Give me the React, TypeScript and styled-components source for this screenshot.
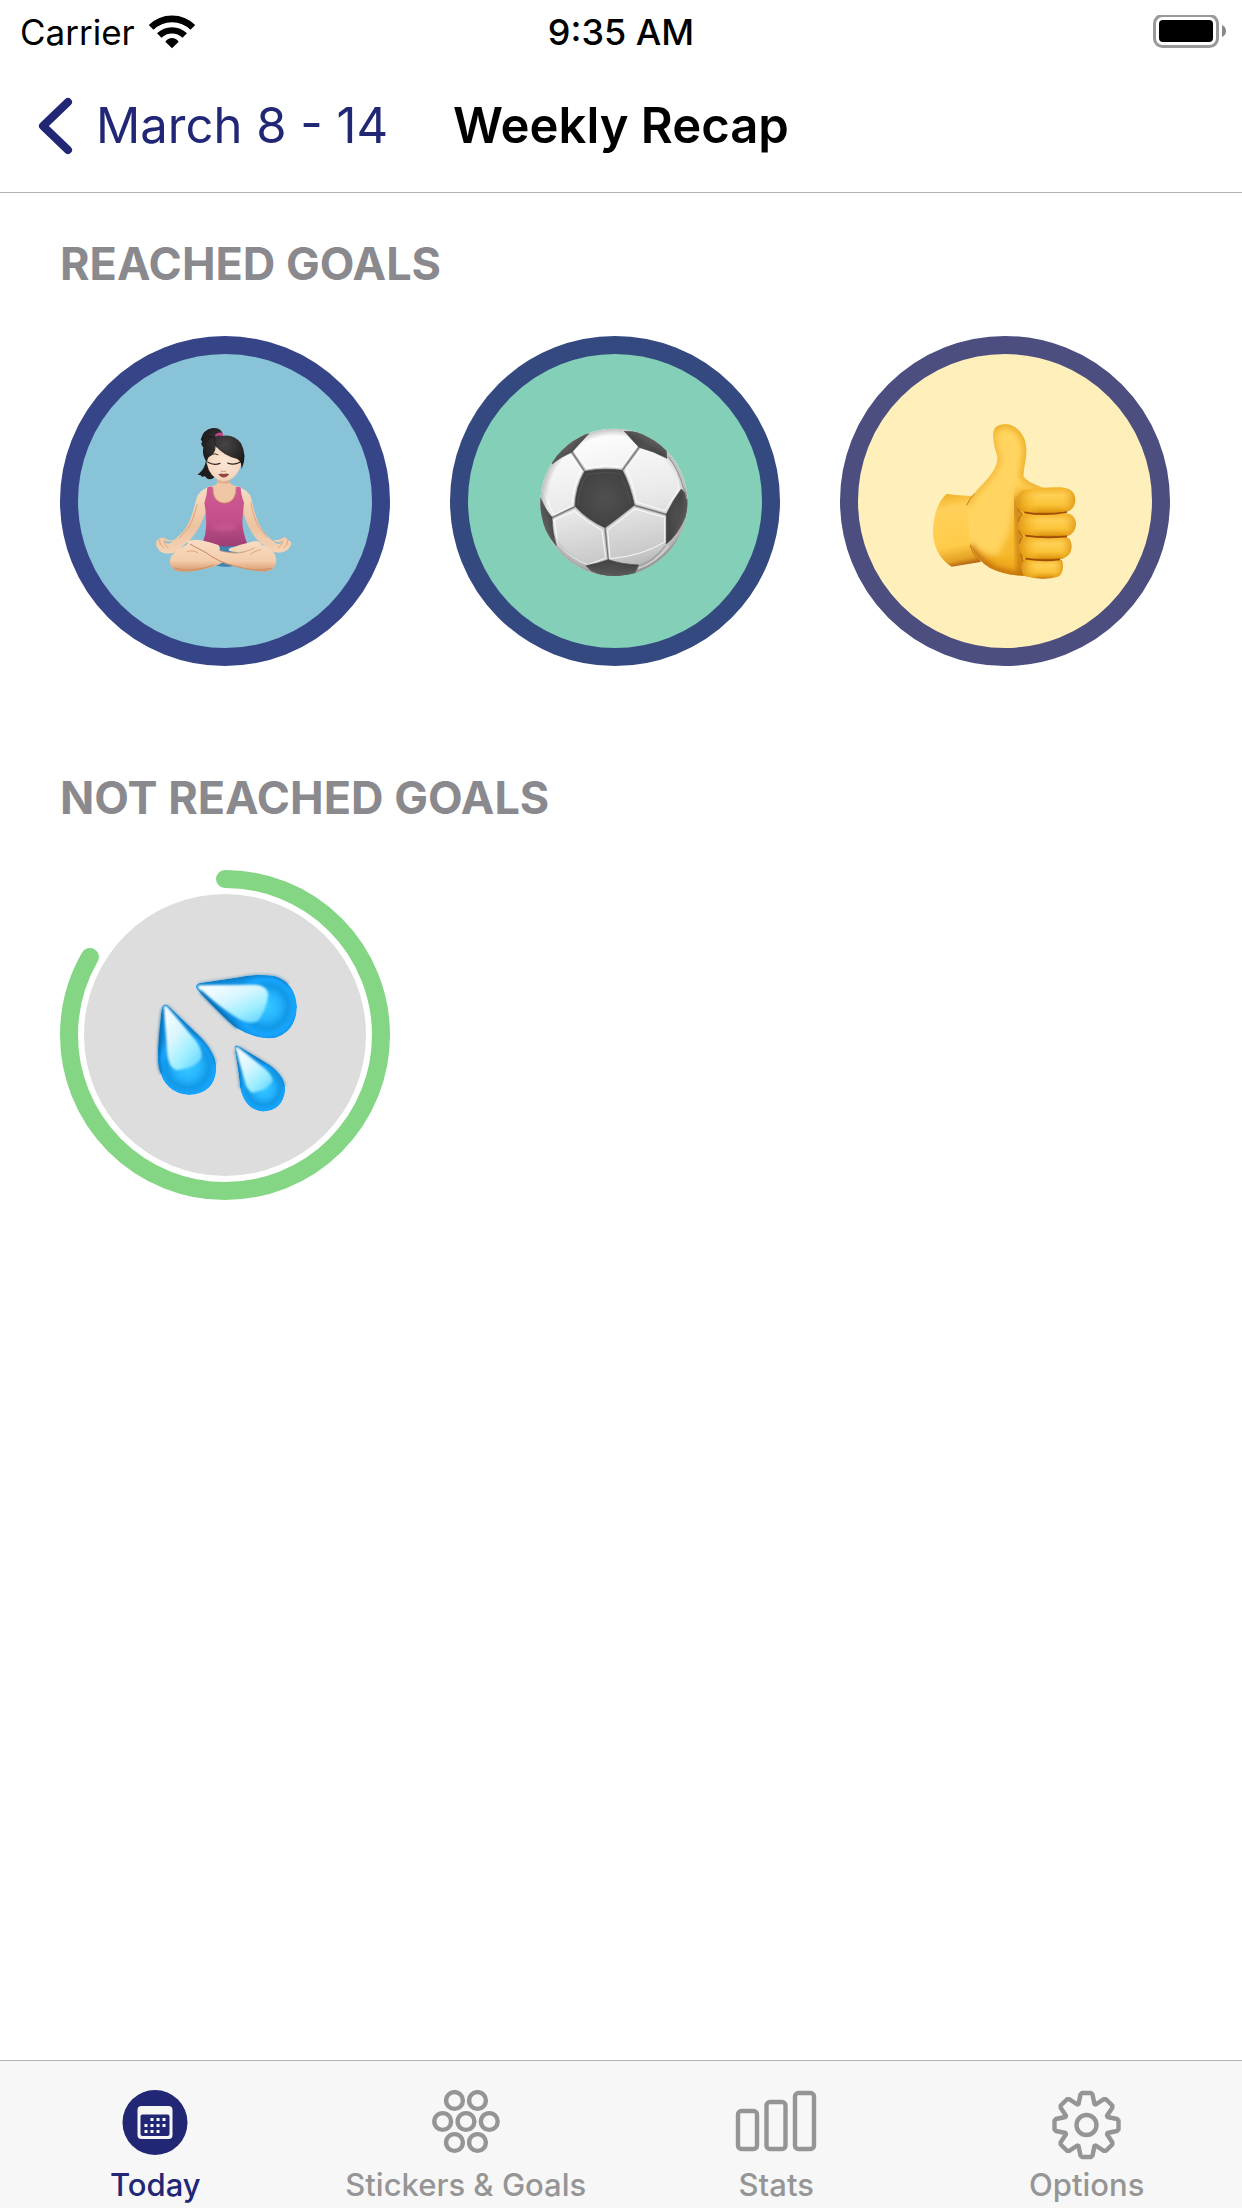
import React from 'react';
import styled, { createGlobalStyle } from 'styled-components';

const navy = '#212774';
const muted = '#959595';
const hairline = '#b2b2b2';

const GlobalStyle = createGlobalStyle`
  *, *::before, *::after { box-sizing: border-box; }
  body {
    margin: 0;
    background: #fff;
    color: #000;
    font-family: Inter, "Liberation Sans", sans-serif;
  }
`;

const Screen = styled.div`
  display: flex;
  flex-direction: column;
  min-height: 100vh;
`;

const ThreeColumns = styled.div`
  display: grid;
  grid-template-columns: 1fr auto 1fr;
  align-items: center;
`;

const StatusBar = styled(ThreeColumns)`
  height: 60px;
  padding: 2px 16px 0;
  font-size: 35px;
  line-height: 60px;
`;

const Carrier = styled.div`
  display: flex;
  align-items: center;
  gap: 13px;
  padding-left: 4px;
`;

const Clock = styled.time`
  font-size: 36px;
  font-weight: 500;
`;

const StatusEnd = styled.div`
  display: flex;
  justify-content: flex-end;
`;

const NavBar = styled(ThreeColumns).attrs({ as: 'header' })`
  height: 133px;
  padding: 0 36px;
  border-bottom: 1px solid ${hairline};
  line-height: 60px;
`;

const BackButton = styled.button`
  display: flex;
  align-items: center;
  justify-self: start;
  gap: 20px;
  padding: 0;
  border: 0;
  background: none;
  color: ${navy};
  font: inherit;
  font-size: 49px;
  white-space: nowrap;
  cursor: pointer;
`;

const Title = styled.h1`
  margin: 0;
  font-size: 49px;
  font-weight: 600;
`;

const Content = styled.main`
  flex: 1;
  padding: 41px 60px 60px;
`;

const Section = styled.section`
  margin-bottom: 102px;
`;

const SectionTitle = styled.h2`
  margin: 0 0 42px;
  color: #8a898e;
  font-size: 45px;
  font-weight: 700;
  line-height: 60px;
`;

const GoalList = styled.ul`
  display: flex;
  flex-wrap: wrap;
  gap: 60px;
  margin: 0;
  padding: 0;
  list-style: none;
`;

const Goal = styled.li<{ $fill?: string; $ring?: string }>`
  display: grid;
  place-items: center;
  width: 330px;
  height: 330px;
  border-radius: 50%;
  background: ${(p) => p.$fill ?? 'none'};
  border: ${(p) => (p.$ring ? `18px solid ${p.$ring}` : '0')};

  > svg {
    grid-area: 1 / 1;
  }
`;

const TabBar = styled.nav`
  display: grid;
  grid-template-columns: repeat(4, 1fr);
  height: 148px;
  padding-top: 29px;
  border-top: 1px solid ${hairline};
  background: #f7f7f7;
`;

const Tab = styled.a<{ $active?: boolean }>`
  display: flex;
  flex-direction: column;
  align-items: center;
  gap: 7px;
  color: ${(p) => (p.$active ? navy : muted)};
  font-size: 31px;
  font-weight: 500;
  line-height: 36px;
  text-decoration: none;
  white-space: nowrap;
`;

const WifiIcon = () => (
  <svg width="48" height="35" viewBox="444 38 144 105" aria-hidden="true">
    <g fill="none" stroke="#000">
      <path strokeWidth="20" d="M453.400 75.400A88.500 88.500 0 0 1 578.600 75.400" />
      <path strokeWidth="19" d="M477.800 99.800A54 54 0 0 1 554.200 99.800" />
    </g>
    <path d="M516 138L496 118Q504 107 516 107T536 118Z" />
  </svg>
);

const BatteryIcon = () => (
  <svg width="73" height="34" viewBox="0 1 73 34" aria-hidden="true">
    <rect x="1.500" y="1.500" width="63" height="31" rx="8" fill="none" stroke="#999" strokeWidth="3" />
    <rect x="6" y="6" width="54" height="22" rx="4" />
    <path d="M69 11Q73 13 73 17T69 23Z" fill="#888" />
  </svg>
);

const ChevronIcon = () => (
  <svg width="40" height="58" viewBox="0 0 40 58" aria-hidden="true">
    <path d="M32 5L7 29L32 53" fill="none" stroke={navy} strokeWidth="8" strokeLinecap="round" strokeLinejoin="round" />
  </svg>
);

const TabIcon = ({ children }: { children: React.ReactNode }) => (
  <svg width="82" height="70" viewBox="-41 0 82 70" fill="none" stroke="currentColor" strokeWidth="4.400" strokeLinejoin="round" aria-hidden="true">
    {children}
  </svg>
);

const calendarDots = [
  [1, 0], [2, 0], [3, 0],
  [0, 1], [1, 1], [2, 1], [3, 1],
  [0, 2], [1, 2], [2, 2],
];

const TodayIcon = () => (
  <TabIcon>
    <circle cy="32.500" r="32.500" fill={navy} stroke="none" />
    <rect x="-17.500" y="16" width="35" height="33" rx="4" fill="#f7f7f7" stroke="none" />
    <rect x="-14.500" y="24.500" width="29" height="21.500" rx="2" fill={navy} stroke="none" />
    {calendarDots.map(([c, r]) => (
      <rect key={`${c}${r}`} x={-10.500 + c * 6} y={28 + r * 6} width="3" height="3" fill="#fff" stroke="none" />
    ))}
  </TabIcon>
);

const stickerSpots = [
  [-11.500, 10.500], [11.500, 10.500],
  [-23.300, 31.500], [0, 31.500], [23.300, 31.500],
  [-11.500, 52.500], [11.500, 52.500],
];

const StickersIcon = () => (
  <TabIcon>
    {stickerSpots.map(([x, y]) => (
      <circle key={`${x},${y}`} cx={x} cy={y} r="8.400" />
    ))}
  </TabIcon>
);

const StatsIcon = () => (
  <TabIcon>
    <rect x="-38" y="21" width="19" height="38" rx="3.500" />
    <rect x="-9.500" y="12" width="19" height="47" rx="3.500" />
    <rect x="19" y="3" width="19" height="56" rx="3.500" />
  </TabIcon>
);

const toothProfile = [
  [-8, -21], [-6, -30.500], [-4.500, -32], [4.500, -32], [6, -30.500], [8, -21],
];

const gearPoints = Array.from({ length: 8 }, (_, i) => {
  const a = (i * Math.PI) / 4;
  return toothProfile
    .map(([x, y]) => `${(x * Math.cos(a) - y * Math.sin(a)).toFixed(2)},${(x * Math.sin(a) + y * Math.cos(a)).toFixed(2)}`)
    .join(' ');
}).join(' ');

const OptionsIcon = () => (
  <TabIcon>
    <g transform="translate(-0.500 35)">
      <polygon points={gearPoints} />
      <circle r="10" />
    </g>
  </TabIcon>
);

const YogaArt = () => (
  <svg width="170" height="180" viewBox="0 3 510 540" role="img" aria-label="Yoga">
    <defs>
      <linearGradient id="yArm" x1="0" y1="0" x2="0" y2="1">
        <stop offset="0" stopColor="#f8dcc4" />
        <stop offset=".6" stopColor="#edc3a0" />
        <stop offset="1" stopColor="#f5d3b6" />
      </linearGradient>
      <linearGradient id="yLeg" x1="0" y1="0" x2="0" y2="1">
        <stop offset="0" stopColor="#f8dcc2" />
        <stop offset=".65" stopColor="#f3cdac" />
        <stop offset="1" stopColor="#d9986c" />
      </linearGradient>
      <radialGradient id="yFace" cx=".5" cy=".45" r=".6">
        <stop offset="0" stopColor="#fbe6d6" />
        <stop offset=".75" stopColor="#f6d8c1" />
        <stop offset="1" stopColor="#e6b593" />
      </radialGradient>
      <linearGradient id="yTop" x1="0" y1="0" x2="0" y2="1">
        <stop offset="0" stopColor="#cf5b93" />
        <stop offset=".55" stopColor="#c4508b" />
        <stop offset="1" stopColor="#9c3e74" />
      </linearGradient>
      <radialGradient id="yHair" cx=".55" cy=".4" r=".6">
        <stop offset="0" stopColor="#4a4648" />
        <stop offset="1" stopColor="#191718" />
      </radialGradient>
      <filter id="ySoft" x="-30%" y="-30%" width="160%" height="160%"><feGaussianBlur stdDeviation="4" /></filter>
    </defs>
    <path d="M198 150Q196 176 173 194Q184 194 186 201Q198 196 199 204Q212 212 223 202L222 160Z" fill="#1f1c1d" />
    <path d="M233 188L233 217Q230 228 200 231L216 290H290L304 231Q272 228 270 217V188Z" fill="#efc7a7" />
    <path d="M235 210Q251 219 269 208L270 218Q252 224 234 217Z" fill="#d99e76" opacity=".7" />
    <path d="M210 230Q178 238 169 266C158 312 146 350 122 372Q105 388 91 400Q76 404 73 390Q82 396 91 394Q106 395 102 390Q86 392 77 386Q66 378 56 387Q45 392 49 407Q55 424 73 430Q94 434 111 422L150 390Q182 355 199 300Z" fill="url(#yArm)" />
    <path d="M292 230Q326 238 334 266C344 312 355 345 374 370Q390 388 408 400Q422 406 427 392Q420 399 412 396Q398 394 403 390Q420 392 429 383Q440 379 442 391Q457 392 453 405Q447 420 430 426Q408 432 390 420L350 388Q320 350 308 300Z" fill="url(#yArm)" />
    <g fill="none" stroke="#d89b70" strokeWidth="3" opacity=".8">
      <path d="M172 282Q160 330 145 354L116 386" />
      <path d="M332 278Q342 326 356 350L382 382" />
      <path d="M59 389Q57 403 73 414M73 392Q73 405 85 414M443 392Q444 405 430 414M428 393Q425 408 414 414" />
    </g>
    <path d="M190 402H318L292 425L278 468Q254 474 224 466L210 420Z" fill="#3f83b2" />
    <path d="M202 232Q210 229 219 231Q218 277 253 279Q288 277 288 231Q296 229 302 232Q303 258 312 277Q310 302 308 322Q304 356 322 402Q256 418 188 400Q201 366 198 330Q198 300 193 280Q201 257 202 232Z" fill="url(#yTop)" />
    <path d="M219 232Q218 277 253 279Q288 277 288 232" fill="none" stroke="#e0a16d" strokeWidth="3" />
    <ellipse cx="253" cy="352" rx="36" ry="12" fill="#d9639a" opacity=".4" filter="url(#ySoft)" />
    <path d="M140 394Q168 385 196 394Q222 401 235 405Q243 413 235 424L262 447Q240 468 196 476Q150 489 110 483Q85 471 90 449Q97 423 133 408Q151 401 140 394Z" fill="url(#yLeg)" />
    <path d="M364 404Q405 414 409 449Q410 481 375 485Q330 484 282 468Q231 457 196 427L150 401Q137 393 156 393Q194 398 226 405Q241 411 240 423Q290 433 317 423Q289 429 268 423Q261 414 282 411Q323 397 348 393Q365 395 364 404Z" fill="url(#yLeg)" />
    <g fill="none" stroke="#c9895d" strokeWidth="3" strokeLinecap="round">
      <path d="M151 403L198 428Q235 456 280 467" />
      <path d="M238 420Q276 434 310 427" opacity=".6" />
      <path d="M140 426Q155 418 173 428M310 426Q330 422 344 413M362 419Q343 422 332 432" opacity=".6" />
      <path d="M102 474Q150 490 220 466M283 468Q350 488 394 475" opacity=".8" />
    </g>
    <path d="M199 120Q196 150 201 163Q208 202 248 216Q290 211 304 163L307 128L278 104H224Z" fill="url(#yFace)" />
    <path d="M182 90Q189 58 218 54Q238 52 246 66L249 77Q284 73 303 100Q323 137 305 177Q304 153 292 147Q250 137 227 108Q227 131 207 141Q201 146 202 159Q184 135 190 112Q180 104 187 94Z" fill="url(#yHair)" />
    <path d="M225 75Q234 64 249 69L248 78Q234 74 227 80Z" fill="#c9478b" />
    <path d="M224 80Q222 98 230 113M188 88Q204 78 216 78M196 98Q207 82 226 80" fill="none" stroke="#0d0c0d" strokeWidth="2" opacity=".7" />
    <path d="M204 157Q221 167 240 160M263 159Q280 167 300 157" fill="none" stroke="#30231f" strokeWidth="3.500" strokeLinecap="round" />
    <path d="M214 134Q224 128 234 134" fill="none" stroke="#44332e" strokeWidth="3" strokeLinecap="round" />
    <path d="M242 183Q250 187 258 183" fill="none" stroke="#d39b7e" strokeWidth="3" />
    <path d="M235 193Q244 189 251 192Q259 189 268 193Q261 202 251 203Q241 202 235 193Z" fill="#a34e46" />
    <path d="M237 194Q251 198 266 194" fill="none" stroke="#71332f" strokeWidth="2" />
  </svg>
);

const BallArt = () => (
  <svg width="190" height="180" viewBox="0 3 570 540" role="img" aria-label="Soccer">
    <defs>
      <linearGradient id="bWhite" x1=".4" y1="0" x2=".6" y2="1">
        <stop offset="0" stopColor="#fff" />
        <stop offset=".5" stopColor="#e9e9e9" />
        <stop offset=".85" stopColor="#c9c9c9" />
        <stop offset="1" stopColor="#a6a6a6" />
      </linearGradient>
      <radialGradient id="bDark">
        <stop offset="0" stopColor="#505050" />
        <stop offset="1" stopColor="#424242" />
      </radialGradient>
      <radialGradient id="bEdge">
        <stop offset=".9" stopColor="#777" stopOpacity="0" />
        <stop offset="1" stopColor="#777" stopOpacity=".45" />
      </radialGradient>
      <clipPath id="bClip"><circle cx="282" cy="277" r="221" /></clipPath>
    </defs>
    <g clipPath="url(#bClip)">
      <rect x="55" y="50" width="455" height="455" fill="url(#bWhite)" />
      <g fill="none" stroke="#c2c2c2" strokeWidth="10">
        <path d="M155 125L194 182M357 112L308 180M343 286L440 314M255 354L265 450M163 292L96 323" />
        <path d="M194 184Q250 173 307 181Q330 225 343 285Q298 322 255 353Q200 328 165 288Q168 230 194 184Z" />
      </g>
      <g fill="none" stroke="#fff" strokeWidth="3" opacity=".85">
        <path d="M160 117L202 174Q250 163 302 170L350 112M318 174Q342 222 350 276L434 302L477 236Q472 180 443 142L366 117L318 174M344 297L434 322V396Q365 438 270 446L263 360ZM163 304L103 329L114 405Q155 447 204 464L257 444L246 362Q205 337 163 304M147 131Q87 165 66 232L101 315L157 287Q159 225 183 181Z" />
      </g>
      <g fill="none" stroke="#707070" strokeWidth="3.500">
        <path d="M155 125L194 184M357 112L307 181M343 286L440 314M255 353L265 450M165 290L96 323" />
      </g>
      <g fill="url(#bDark)" stroke="#434343" strokeWidth="2">
        <path d="M194 184Q250 173 307 181Q330 225 343 285Q298 322 255 353Q200 328 165 288Q168 230 194 184Z" />
        <path d="M206 71Q187 92 155 127Q125 139 96 162Q105 75 206 71Z" />
        <path d="M313 64L357 112Q401 124 441 145L438 113Q388 62 313 64Z" />
        <path d="M484 237Q457 273 439 313V402Q474 374 496 320Q513 257 484 237Z" />
        <path d="M61 263Q76 300 96 322Q97 367 109 407Q70 363 60 310Z" />
        <path d="M198 467Q235 460 265 449Q306 463 356 465L344 490Q270 512 213 482Z" />
      </g>
      <path d="M174 285Q178 230 201 193Q250 184 300 190Q320 225 332 281" fill="none" stroke="#606060" strokeWidth="3" opacity=".5" />
      <path d="M445 140Q476 180 489 230Q499 246 500 267M436 407Q401 453 357 468M482 375Q434 450 350 485" fill="none" stroke="#a7a7a7" strokeWidth="4" />
      <path d="M452 138Q484 178 496 232M446 408Q403 462 354 475" fill="none" stroke="#f0f0f0" strokeWidth="4" />
      <circle cx="282" cy="277" r="221" fill="url(#bEdge)" />
    </g>
  </svg>
);

const fingers = [
  'M355 237Q400 231 452 232Q496 235 496 271Q494 301 466 306Q410 318 350 308Q318 301 319 272Q323 242 355 237Z',
  'M346 312Q410 318 466 309Q497 312 498 343Q495 374 469 379Q410 386 349 378Q326 372 324 347Q324 322 346 312Z',
  'M347 379Q405 386 469 380Q485 386 485 411Q483 441 450 448Q400 454 350 445Q330 439 328 412Q328 390 347 379Z',
  'M341 447Q398 456 454 449Q459 454 459 471Q456 496 443 500Q397 513 347 499Q335 493 335 470Z',
];

const ThumbArt = () => (
  <svg width="190" height="180" viewBox="0 3 570 540" role="img" aria-label="Thumbs up">
    <defs>
      <linearGradient id="tWrist" x1=".4" y1="0" x2=".55" y2="1">
        <stop offset="0" stopColor="#f2b52b" />
        <stop offset=".18" stopColor="#ffd05a" />
        <stop offset=".7" stopColor="#ffcb49" />
        <stop offset=".9" stopColor="#e4a023" />
        <stop offset="1" stopColor="#a8540f" />
      </linearGradient>
      <linearGradient id="tFinger" x1="0" y1="0" x2="0" y2="1">
        <stop offset="0" stopColor="#f2b227" />
        <stop offset=".3" stopColor="#ffd055" />
        <stop offset=".65" stopColor="#fbc339" />
        <stop offset=".9" stopColor="#e29b12" />
        <stop offset="1" stopColor="#b66309" />
      </linearGradient>
      <linearGradient id="tSide" x1="0" y1="0" x2="1" y2="0">
        <stop offset="0" stopColor="#d48b0b" stopOpacity=".8" />
        <stop offset=".2" stopColor="#f3b121" stopOpacity=".55" />
        <stop offset=".4" stopColor="#ffc63c" stopOpacity="0" />
        <stop offset=".75" stopColor="#ffc63c" stopOpacity="0" />
        <stop offset="1" stopColor="#d68d0d" stopOpacity=".75" />
      </linearGradient>
      <clipPath id="tHandClip">
        <path d="M249 70Q251 43 287 42Q322 45 342 83C359 128 341 162 340 199Q348 216 400 233L440 300L380 498Q294 501 240 474Q204 453 181 408L170 285Q184 256 226 214Q271 164 260 132Q250 105 249 70Z" />
      </clipPath>
      <filter id="tBlur" x="-30%" y="-30%" width="160%" height="160%"><feGaussianBlur stdDeviation="9" /></filter>
      <filter id="tFine" x="-20%" y="-20%" width="140%" height="140%"><feGaussianBlur stdDeviation="2" /></filter>
    </defs>
    <path d="M110 251Q145 257 192 258L231 380L211 456L125 470Q70 436 69 363Q72 285 110 251Z" fill="url(#tWrist)" />
    <g clipPath="url(#tHandClip)">
      <rect x="150" y="30" width="310" height="490" fill="#ffd460" />
      <path d="M249 70Q251 43 287 42Q322 45 342 83C359 128 341 162 340 199Q348 216 400 233" fill="none" stroke="#e9a016" strokeWidth="15" filter="url(#tBlur)" />
      <path d="M249 70Q250 105 260 132Q271 164 226 214Q184 256 170 285" fill="none" stroke="#edaa25" strokeWidth="12" filter="url(#tBlur)" />
      <path d="M181 408Q230 445 315 445L370 435V520H170Z" fill="#efa51b" filter="url(#tBlur)" />
      <path d="M180 408Q215 495 390 503" fill="none" stroke="#a7520b" strokeWidth="14" filter="url(#tBlur)" />
      <path d="M322 232L300 365L250 465H355V235Z" fill="#f3af1e" opacity=".75" filter="url(#tBlur)" />
      <path d="M322 260Q313 290 325 324L333 500" fill="none" stroke="#b7670a" strokeWidth="15" filter="url(#tBlur)" />
    </g>
    <path d="M170 286Q177 268 193 251M181 405Q187 433 210 454" fill="none" stroke="#bb6b10" strokeWidth="3" opacity=".8" filter="url(#tFine)" />
    {fingers.map((d) => (
      <g key={d}>
        <path d={d} fill="url(#tFinger)" />
        <path d={d} fill="url(#tSide)" />
      </g>
    ))}
    <path d="M343 307Q402 319 471 306M346 377Q402 386 471 379M346 446Q402 455 450 448" fill="none" stroke="#9e4c07" strokeWidth="5" filter="url(#tFine)" />
    <path d="M323 295Q327 308 337 312Q326 320 325 336M326 361Q331 376 339 380Q329 388 329 401M331 431Q339 445 339 455" fill="none" stroke="#a85508" strokeWidth="3" opacity=".7" filter="url(#tFine)" />
  </svg>
);

const drops = [
  {
    body: 'M476 400L595 382Q648 370 704 378Q766 397 771 470Q769 544 705 564Q648 571 590 535Q569 522 472 420Q462 406 476 400Z',
    light: 'M478 405Q565 405 650 404Q683 409 685 434Q679 478 655 512Q634 525 602 510Q560 487 476 416Q470 407 478 405Z',
    cx: 680, cy: 470, r: 105,
  },
  {
    body: 'M366 470Q371 458 383 465L470 550Q532 608 529 660Q522 732 447 735Q373 731 356 652Q348 613 366 470Z',
    light: 'M370 472Q376 462 385 473L468 573Q489 600 484 624Q470 653 409 661Q386 650 382 614Q378 540 370 472Z',
    cx: 443, cy: 650, r: 105,
  },
  {
    body: 'M583 594Q583 581 596 588L688 644Q737 679 736 720Q729 782 669 785Q613 780 600 712Q597 670 583 594Z',
    light: 'M586 596Q588 586 598 594L680 661Q700 680 697 695Q679 722 637 728Q619 719 614 692Z',
    cx: 671, cy: 715, r: 82,
  },
];

const DropsArt = () => (
  <svg width="330" height="330" viewBox="60 60 990 990" role="img" aria-label="Water">
    <defs>
      {drops.map((d, i) => (
        <React.Fragment key={d.cx}>
          <radialGradient id={`drop${i}`} gradientUnits="userSpaceOnUse" cx={d.cx} cy={d.cy} r={d.r}>
            <stop offset="0" stopColor="#35c9ff" />
            <stop offset=".35" stopColor="#27b5ff" />
            <stop offset=".6" stopColor="#1299e6" />
            <stop offset=".8" stopColor="#16a5ff" />
            <stop offset="1" stopColor="#108fe0" />
          </radialGradient>
          <clipPath id={`dropClip${i}`}><path d={d.body} /></clipPath>
        </React.Fragment>
      ))}
      <linearGradient id="dropLight" x1="0" y1="0" x2=".8" y2="1">
        <stop offset="0" stopColor="#fff" />
        <stop offset=".45" stopColor="#d8f6ff" />
        <stop offset=".75" stopColor="#9eefff" />
        <stop offset="1" stopColor="#6fd6ff" />
      </linearGradient>
      <filter id="dropSoft" x="-20%" y="-20%" width="140%" height="140%"><feGaussianBlur stdDeviation="3" /></filter>
      <filter id="dropRim" x="-20%" y="-20%" width="140%" height="140%"><feGaussianBlur stdDeviation="5" /></filter>
    </defs>
    {drops.map((d, i) => (
      <g key={d.cx} clipPath={`url(#dropClip${i})`}>
        <path d={d.body} fill={`url(#drop${i})`} />
        <path d={d.light} fill="url(#dropLight)" filter="url(#dropSoft)" />
      </g>
    ))}
    <g fill="none" stroke="#075f9f" strokeWidth="10" filter="url(#dropRim)">
      <path clipPath="url(#dropClip0)" d="M476 398L595 380Q648 368 704 376Q730 382 745 402M480 426L590 537" />
      <path clipPath="url(#dropClip1)" d="M385 463L470 548Q525 600 529 640M365 474L354 620Q354 650 362 670" />
      <path clipPath="url(#dropClip2)" d="M598 587L688 642Q732 671 736 707M582 600L600 715" />
    </g>
  </svg>
);

const RingBase = styled.svg`
  width: 330px;
  height: 330px;
`;

const ProgressRing = ({ value, total }: { value: number; total: number }) => (
  <RingBase viewBox="-165 -165 330 330" role="img" aria-label={`${value} / ${total}`}>
    <circle r="141" fill="#ddd" />
    <circle
      r="156"
      fill="none"
      stroke="#84d685"
      strokeWidth="18"
      strokeLinecap="round"
      pathLength={total}
      strokeDasharray={`${value} ${total}`}
      transform="rotate(-90)"
    />
  </RingBase>
);

const reached = [
  { id: 'yoga', fill: '#89c3d8', ring: '#354587', art: <YogaArt /> },
  { id: 'soccer', fill: '#83cfb8', ring: '#334980', art: <BallArt /> },
  { id: 'thumb', fill: '#ffefba', ring: '#4d4e80', art: <ThumbArt /> },
];

const tabs = [
  { label: 'Today', href: '#today', icon: <TodayIcon />, active: true },
  { label: 'Stickers & Goals', href: '#stickers', icon: <StickersIcon /> },
  { label: 'Stats', href: '#stats', icon: <StatsIcon /> },
  { label: 'Options', href: '#options', icon: <OptionsIcon /> },
];

export default function App() {
  return (
    <Screen>
      <GlobalStyle />
      <StatusBar>
        <Carrier>
          Carrier
          <WifiIcon />
        </Carrier>
        <Clock>9:35 AM</Clock>
        <StatusEnd>
          <BatteryIcon />
        </StatusEnd>
      </StatusBar>
      <NavBar>
        <BackButton type="button">
          <ChevronIcon />
          March 8 - 14
        </BackButton>
        <Title>Weekly Recap</Title>
      </NavBar>
      <Content>
        <Section>
          <SectionTitle>REACHED GOALS</SectionTitle>
          <GoalList>
            {reached.map((g) => (
              <Goal key={g.id} $fill={g.fill} $ring={g.ring}>
                {g.art}
              </Goal>
            ))}
          </GoalList>
        </Section>
        <Section>
          <SectionTitle>NOT REACHED GOALS</SectionTitle>
          <GoalList>
            <Goal>
              <ProgressRing value={5} total={6} />
              <DropsArt />
            </Goal>
          </GoalList>
        </Section>
      </Content>
      <TabBar>
        {tabs.map((t) => (
          <Tab key={t.label} href={t.href} $active={t.active} aria-current={t.active ? 'page' : undefined}>
            {t.icon}
            {t.label}
          </Tab>
        ))}
      </TabBar>
    </Screen>
  );
}
